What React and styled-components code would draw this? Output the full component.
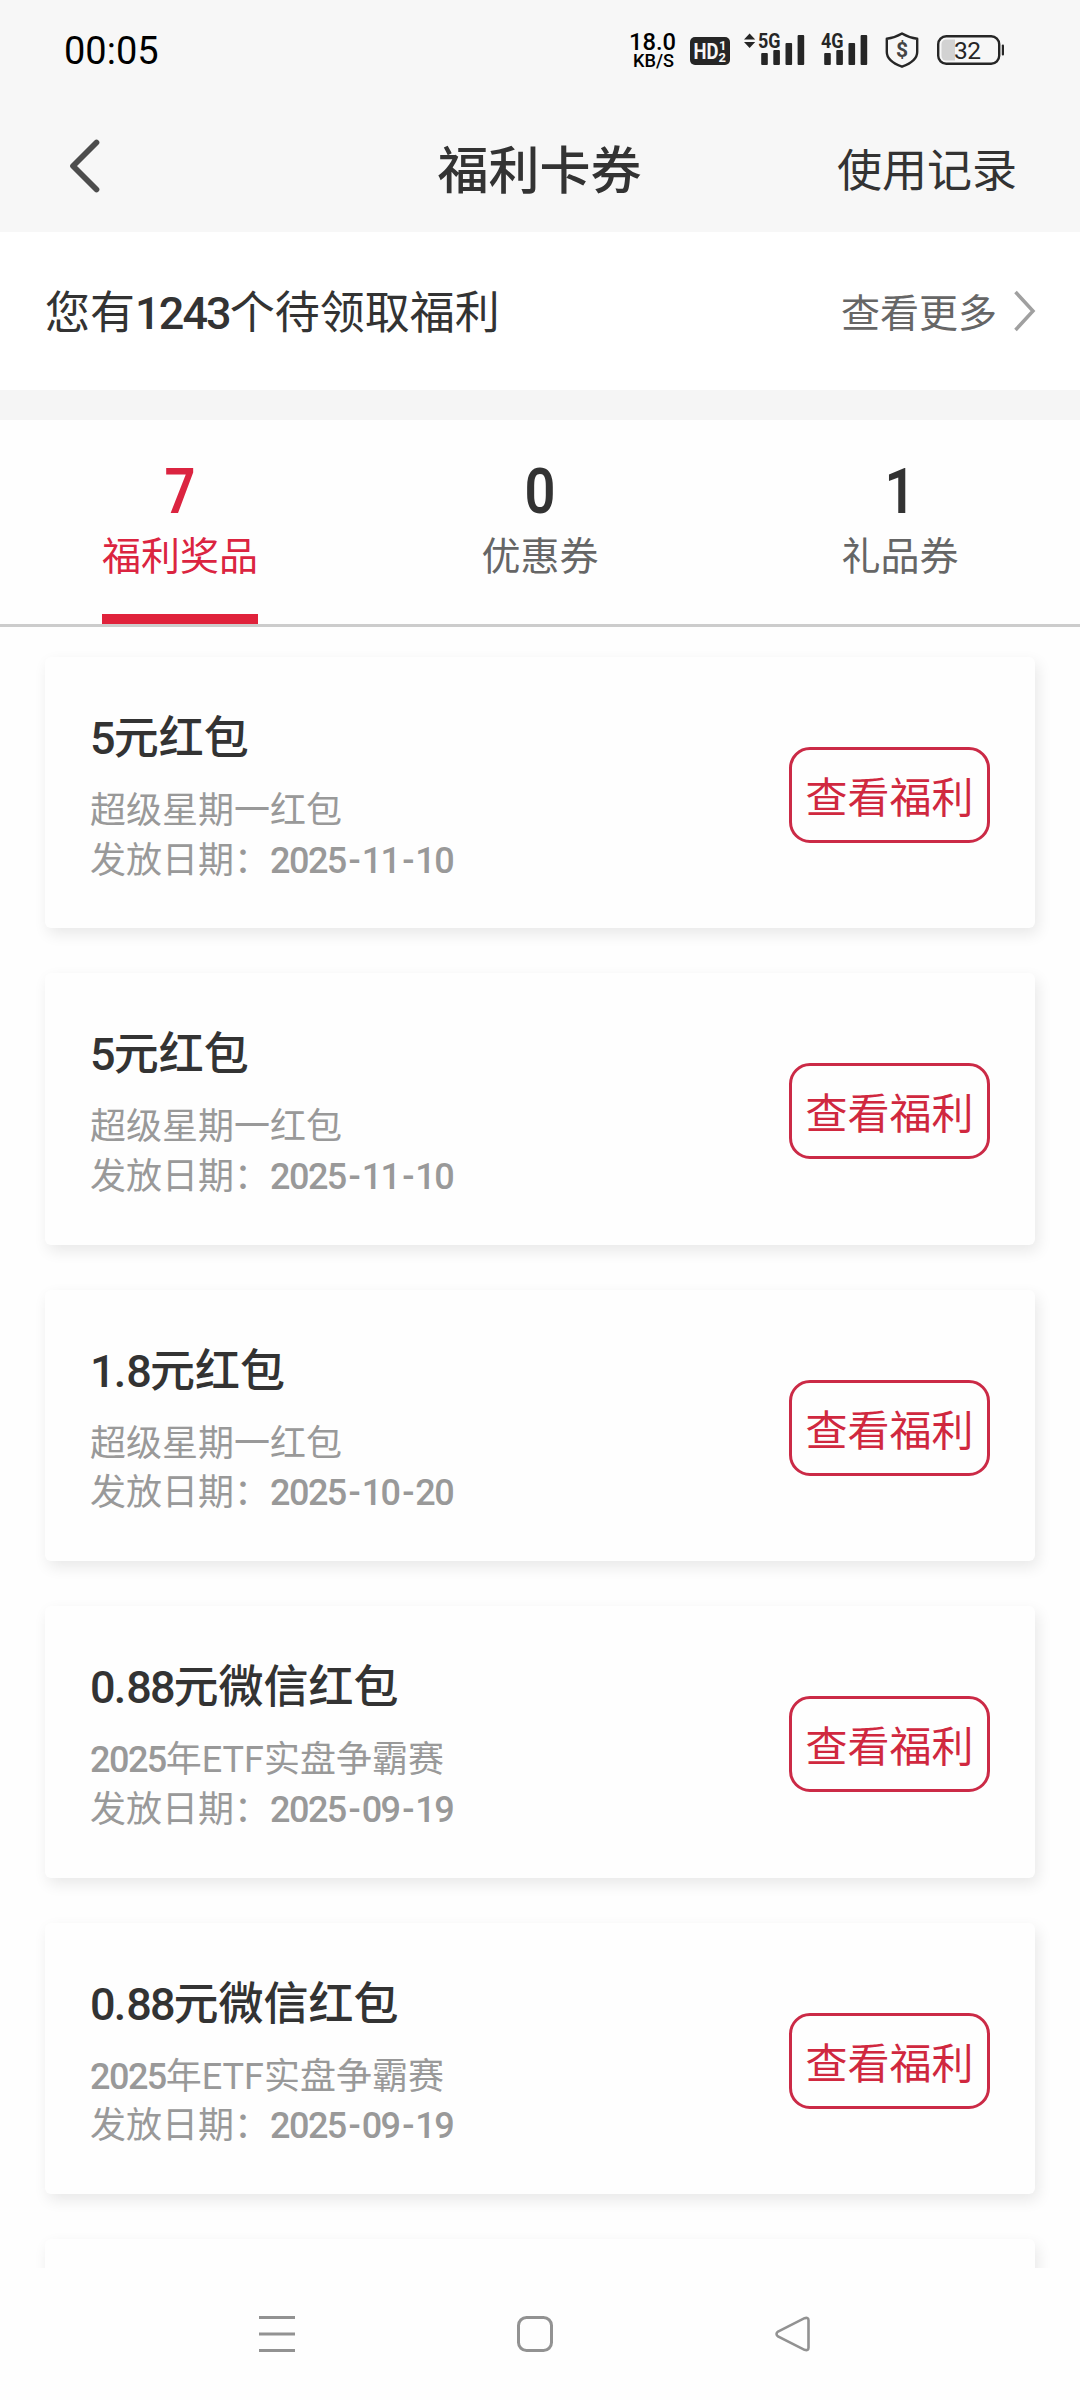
import React, { useState } from 'react'
import styled, { createGlobalStyle } from 'styled-components'

const GlobalStyle = createGlobalStyle`
  * {
    box-sizing: border-box;
  }
  body {
    margin: 0;
    background: #fefefe;
    font-family: Roboto, 'Noto Sans CJK SC', sans-serif;
    color: #333;
  }
`

const Screen = styled.div`
  width: 1080px;
  height: 2400px;
  display: flex;
  flex-direction: column;
  overflow: hidden;
`

const StatusBar = styled.div`
  height: 100px;
  padding: 0 75px 0 64px;
  background: #f7f7f7;
  display: flex;
  justify-content: space-between;
  align-items: center;
`

const Clock = styled.span`
  padding-top: 2px;
  font-size: 38px;
  font-weight: 450;
  line-height: 40px;
  color: #000;
`

const StatusIcons = styled.svg`
  display: block;
  width: 380px;
  height: 100px;
  fill: #262626;
`

const Header = styled.header`
  height: 132px;
  padding: 0 63px 0 62px;
  background: #f7f7f7;
  display: grid;
  grid-template-columns: 1fr auto 1fr;
  align-items: center;
`

const BackButton = styled.button`
  width: 42px;
  height: 60px;
  padding: 0 0 0 4px;
  border: 0;
  background: none;
  cursor: pointer;
`

const PageTitle = styled.h1`
  margin: 12px 0 0;
  font-size: 51px;
  font-weight: 500;
  line-height: 60px;
`

const HistoryLink = styled.a`
  justify-self: end;
  margin-top: 12px;
  font-size: 45px;
  line-height: 60px;
`

const Notice = styled.section`
  height: 158px;
  padding: 0 44px 0 45px;
  background: #fff;
  display: flex;
  justify-content: space-between;
  align-items: center;
`

const NoticeText = styled.span`
  font-size: 45px;
  line-height: 60px;
  padding-top: 6px;
`

const MoreLink = styled.a`
  display: flex;
  align-items: center;
  gap: 16px;
  font-size: 39px;
  line-height: 60px;
  color: #666;
`

const MoreText = styled.span`
  padding-top: 5px;
`

const Divider = styled.div`
  height: 30px;
  background: #f5f5f5;
`

const Tabs = styled.nav`
  height: 207px;
  border-bottom: 3px solid #ccc;
  display: flex;
`

const Tab = styled.div`
  flex: 1;
  padding-top: 42px;
  display: flex;
  flex-direction: column;
  align-items: center;
  color: ${({ $active }) => ($active ? '#db2440' : '#666')};
  cursor: pointer;
`

const TabCount = styled.span`
  font-size: 63px;
  font-weight: 600;
  line-height: 60px;
  color: ${({ $active }) => ($active ? '#db2440' : '#333')};
  transform: scaleX(0.86);
`

const TabLabel = styled.span`
  height: 102px;
  padding-top: 5px;
  font-size: 39px;
  line-height: 60px;
  border-bottom: 10px solid ${({ $active }) => ($active ? '#e0223b' : 'transparent')};
`

const CardList = styled.main`
  height: 1641px;
  padding: 30px 45px 0;
  overflow: hidden;
  display: flex;
  flex-direction: column;
  gap: 45px;
`

const Card = styled.article`
  flex: none;
  height: 271.4px;
  padding: 0 45px;
  border-radius: 6px;
  background: #fefefe;
  box-shadow: 3px 6px 15px rgba(0, 0, 0, 0.09);
  display: flex;
  justify-content: space-between;
  align-items: flex-start;
`

const CardInfo = styled.div`
  padding-top: 52px;
`

const CardTitle = styled.h2`
  margin: 0 0 18px;
  font-size: 45px;
  font-weight: 500;
  line-height: 60px;
`

const CardLine = styled.p`
  margin: 0;
  font-size: 36px;
  line-height: 49.5px;
  color: #999;
`

const Digits = styled.span`
  font-weight: 500;
  letter-spacing: -0.042em;
`

const Dash = styled.span`
  font-weight: 500;
  padding: 0 0.025em 0 0.075em;
`

const CardButton = styled.button`
  width: 201px;
  height: 96px;
  margin-top: 90px;
  padding: 8px 0 0;
  border: 3px solid #cb2a46;
  border-radius: 21px;
  background: none;
  color: #d0283f;
  font-family: inherit;
  font-size: 42px;
  line-height: 60px;
  white-space: nowrap;
  cursor: pointer;
`

const NavBar = styled.footer`
  height: 132px;
  padding: 0 269px 0 259px;
  background: #fefefe;
  display: flex;
  justify-content: space-between;
  align-items: center;
`

const NavIcon = styled.svg`
  width: 36px;
  height: 36px;
  fill: none;
  stroke: #929292;
  stroke-width: 3;
`

const tabs = [
  { label: '福利奖品', count: 7 },
  { label: '优惠券', count: 0 },
  { label: '礼品券', count: 1 },
]

const cards = [
  { title: '5元红包', source: '超级星期一红包', date: '2025-11-10' },
  { title: '5元红包', source: '超级星期一红包', date: '2025-11-10' },
  { title: '1.8元红包', source: '超级星期一红包', date: '2025-10-20' },
  { title: '0.88元微信红包', source: '2025年ETF实盘争霸赛', date: '2025-09-19' },
  { title: '0.88元微信红包', source: '2025年ETF实盘争霸赛', date: '2025-09-19' },
]

// numbers are set tighter and heavier than the Chinese text around them
const withDigits = (text) =>
  text.split(/(\d+|-)/).map((part, i) => {
    if (part === '-') return <Dash key={i}>-</Dash>
    return /^\d/.test(part) ? <Digits key={i}>{part}</Digits> : part
  })

const Signal = ({ x, label }) => (
  <g>
    <text x={x} y='47.8' fontSize='21' fontWeight='700' textLength='22.5' lengthAdjust='spacingAndGlyphs'>
      {label}
    </text>
    <rect x={x + 3.2} y='53' width='6.6' height='12' rx='1' />
    <rect x={x + 15.3} y='50' width='6.6' height='15' rx='1' />
    <rect x={x + 27.5} y='43' width='6.6' height='22' rx='1' />
    <rect x={x + 39.6} y='35' width='6.6' height='30' rx='1' />
  </g>
)

const StatusIconSet = () => (
  <StatusIcons viewBox='625 0 380 100'>
    <g fill='#000' fontWeight='500'>
      <text x='629' y='50' fontSize='24' textLength='47' lengthAdjust='spacingAndGlyphs'>18.0</text>
      <text x='633' y='67' fontSize='18' textLength='41' lengthAdjust='spacingAndGlyphs'>KB/S</text>
    </g>
    <rect x='690' y='37' width='40' height='28' rx='5' />
    <g fill='#f7f7f7' fontWeight='700'>
      <text x='693.5' y='59' fontSize='22' textLength='25' lengthAdjust='spacingAndGlyphs'>HD</text>
      <text x='719' y='50' fontSize='13'>1</text>
      <text x='718.5' y='61.5' fontSize='13'>2</text>
    </g>
    <path d='M744 39.5l5.6-6 5.6 6zM744 42h11.2l-5.6 6z' />
    <Signal x={758} label='5G' />
    <Signal x={821} label='4G' />
    <path
      d='M902 33.5c5 3 9.5 4.5 15.2 5.2v13.3c0 7-6.5 11.5-15.2 14.7c-8.7-3.2-15.2-7.7-15.2-14.7v-13.3c5.7-.7 10.2-2.2 15.2-5.2z'
      fill='none'
      stroke='#262626'
      strokeWidth='2.4'
      strokeLinejoin='round'
    />
    <text x='902' y='56.5' fontSize='21' fontWeight='700' textAnchor='middle' fill='#444'>$</text>
    <path d='M955 39.5h-9a4.5 4.5 0 0 0-4.5 4.5v12a4.5 4.5 0 0 0 4.5 4.5h9z' fill='#d2d2d2' />
    <rect x='938.2' y='36.2' width='61' height='27.6' rx='8' fill='none' stroke='#262626' strokeWidth='2.4' />
    <rect x='1001.8' y='44.5' width='2.2' height='11' rx='1' />
    <text x='967.5' y='59' fontSize='24.5' textAnchor='middle' textLength='27'>32</text>
  </StatusIcons>
)

export default function App() {
  const [activeTab, setActiveTab] = useState(0)

  return (
    <Screen>
      <GlobalStyle />
      <StatusBar>
        <Clock>00:05</Clock>
        <StatusIconSet />
      </StatusBar>
      <Header>
        <BackButton aria-label='返回'>
          <svg width='38' height='60' fill='none' stroke='#4d4d4d' strokeWidth='5.7' strokeLinecap='round' strokeLinejoin='round'>
            <path d='M30.5 6.5L7 30l23.5 23.5' />
          </svg>
        </BackButton>
        <PageTitle>福利卡券</PageTitle>
        <HistoryLink>使用记录</HistoryLink>
      </Header>

      <Notice>
        <NoticeText>{withDigits('您有1243个待领取福利')}</NoticeText>
        <MoreLink>
          <MoreText>查看更多</MoreText>
          <svg width='23' height='42' fill='none' stroke='#a0a0a0' strokeWidth='3.5'>
            <path d='M2.5 2L20 21L2.5 40' />
          </svg>
        </MoreLink>
      </Notice>
      <Divider />

      <Tabs>
        {tabs.map(({ label, count }, i) => (
          <Tab key={label} $active={activeTab === i} onClick={() => setActiveTab(i)}>
            <TabCount $active={activeTab === i}>{count}</TabCount>
            <TabLabel $active={activeTab === i}>{label}</TabLabel>
          </Tab>
        ))}
      </Tabs>

      <CardList>
        {cards.map(({ title, source, date }, i) => (
          <Card key={i}>
            <CardInfo>
              <CardTitle>{withDigits(title)}</CardTitle>
              <CardLine>{withDigits(source)}</CardLine>
              <CardLine>发放日期：{withDigits(date)}</CardLine>
            </CardInfo>
            <CardButton>查看福利</CardButton>
          </Card>
        ))}
        {/* next card, cut off by the navigation bar */}
        <Card />
      </CardList>

      <NavBar>
        <NavIcon>
          <path d='M0 1.5h36M0 18h36M0 34.5h36' />
        </NavIcon>
        <NavIcon>
          <rect x='1.5' y='1.5' width='33' height='33' rx='8' />
        </NavIcon>
        <NavIcon>
          <path d='M3 15.6L29.5 2.2q4-1.2 4 2v27.6q0 3.2-4 2L3 20.4q-3-2.4 0-4.8z' strokeWidth='2.6' />
        </NavIcon>
      </NavBar>
    </Screen>
  )
}
